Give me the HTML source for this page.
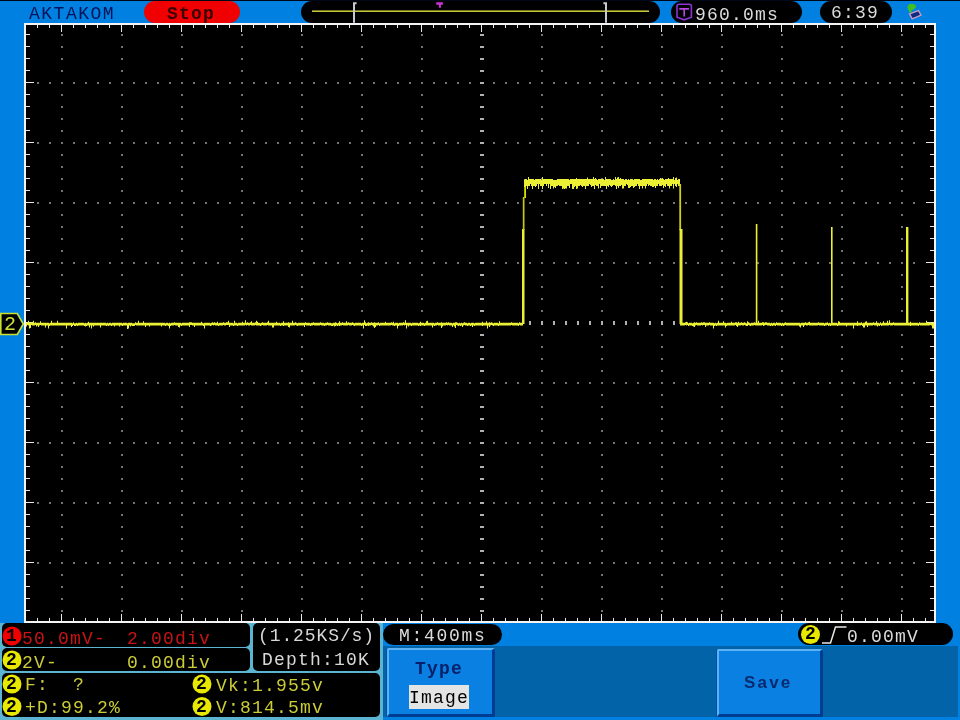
<!DOCTYPE html>
<html><head><meta charset="utf-8">
<style>
html,body{margin:0;padding:0;}
body{width:960px;height:720px;position:relative;overflow:hidden;background:#0080e0;font-family:"Liberation Mono",monospace;}
.a{position:absolute;}
.t{position:absolute;white-space:pre;font-family:"Liberation Mono",monospace;font-size:18px;line-height:20px;letter-spacing:1.2px;}
.pill{position:absolute;background:#000;border-radius:11px;}
</style></head><body><div style="position:absolute;left:0;top:0;width:960px;height:720px;overflow:hidden;filter:blur(0.45px)">
<!-- top dark row -->
<div class="a" style="left:0;top:0;width:960px;height:1px;background:#000818"></div>

<!-- graticule + waveform -->
<svg class="a" style="left:0;top:0" width="960" height="720" viewBox="0 0 960 720" shape-rendering="crispEdges">
<rect x="24" y="23" width="912" height="600" fill="#f4f4f4"/>
<rect x="26" y="25" width="908" height="596" fill="#000"/>
<path d="M37.5 25v3M37.5 621v-3M49.5 25v3M49.5 621v-3M61.5 25v7M61.5 621v-7M73.5 25v3M73.5 621v-3M85.5 25v3M85.5 621v-3M97.5 25v3M97.5 621v-3M109.5 25v3M109.5 621v-3M121.5 25v7M121.5 621v-7M133.5 25v3M133.5 621v-3M145.5 25v3M145.5 621v-3M157.5 25v3M157.5 621v-3M169.5 25v3M169.5 621v-3M181.5 25v7M181.5 621v-7M193.5 25v3M193.5 621v-3M205.5 25v3M205.5 621v-3M217.5 25v3M217.5 621v-3M229.5 25v3M229.5 621v-3M241.5 25v7M241.5 621v-7M253.5 25v3M253.5 621v-3M265.5 25v3M265.5 621v-3M277.5 25v3M277.5 621v-3M289.5 25v3M289.5 621v-3M301.5 25v7M301.5 621v-7M313.5 25v3M313.5 621v-3M325.5 25v3M325.5 621v-3M337.5 25v3M337.5 621v-3M349.5 25v3M349.5 621v-3M361.5 25v7M361.5 621v-7M373.5 25v3M373.5 621v-3M385.5 25v3M385.5 621v-3M397.5 25v3M397.5 621v-3M409.5 25v3M409.5 621v-3M421.5 25v7M421.5 621v-7M433.5 25v3M433.5 621v-3M445.5 25v3M445.5 621v-3M457.5 25v3M457.5 621v-3M469.5 25v3M469.5 621v-3M481.5 25v7M481.5 621v-7M493.5 25v3M493.5 621v-3M505.5 25v3M505.5 621v-3M517.5 25v3M517.5 621v-3M529.5 25v3M529.5 621v-3M541.5 25v7M541.5 621v-7M553.5 25v3M553.5 621v-3M565.5 25v3M565.5 621v-3M577.5 25v3M577.5 621v-3M589.5 25v3M589.5 621v-3M601.5 25v7M601.5 621v-7M613.5 25v3M613.5 621v-3M625.5 25v3M625.5 621v-3M637.5 25v3M637.5 621v-3M649.5 25v3M649.5 621v-3M661.5 25v7M661.5 621v-7M673.5 25v3M673.5 621v-3M685.5 25v3M685.5 621v-3M697.5 25v3M697.5 621v-3M709.5 25v3M709.5 621v-3M721.5 25v7M721.5 621v-7M733.5 25v3M733.5 621v-3M745.5 25v3M745.5 621v-3M757.5 25v3M757.5 621v-3M769.5 25v3M769.5 621v-3M781.5 25v7M781.5 621v-7M793.5 25v3M793.5 621v-3M805.5 25v3M805.5 621v-3M817.5 25v3M817.5 621v-3M829.5 25v3M829.5 621v-3M841.5 25v7M841.5 621v-7M853.5 25v3M853.5 621v-3M865.5 25v3M865.5 621v-3M877.5 25v3M877.5 621v-3M889.5 25v3M889.5 621v-3M901.5 25v7M901.5 621v-7M913.5 25v3M913.5 621v-3M925.5 25v3M925.5 621v-3M26 34.5h4M934 34.5h-4M26 46.5h4M934 46.5h-4M26 58.5h4M934 58.5h-4M26 70.5h4M934 70.5h-4M26 82.5h8M934 82.5h-8M26 94.5h4M934 94.5h-4M26 106.5h4M934 106.5h-4M26 118.5h4M934 118.5h-4M26 130.5h4M934 130.5h-4M26 142.5h8M934 142.5h-8M26 154.5h4M934 154.5h-4M26 166.5h4M934 166.5h-4M26 178.5h4M934 178.5h-4M26 190.5h4M934 190.5h-4M26 202.5h8M934 202.5h-8M26 214.5h4M934 214.5h-4M26 226.5h4M934 226.5h-4M26 238.5h4M934 238.5h-4M26 250.5h4M934 250.5h-4M26 262.5h8M934 262.5h-8M26 274.5h4M934 274.5h-4M26 286.5h4M934 286.5h-4M26 298.5h4M934 298.5h-4M26 310.5h4M934 310.5h-4M26 322.5h8M934 322.5h-8M26 334.5h4M934 334.5h-4M26 346.5h4M934 346.5h-4M26 358.5h4M934 358.5h-4M26 370.5h4M934 370.5h-4M26 382.5h8M934 382.5h-8M26 394.5h4M934 394.5h-4M26 406.5h4M934 406.5h-4M26 418.5h4M934 418.5h-4M26 430.5h4M934 430.5h-4M26 442.5h8M934 442.5h-8M26 454.5h4M934 454.5h-4M26 466.5h4M934 466.5h-4M26 478.5h4M934 478.5h-4M26 490.5h4M934 490.5h-4M26 502.5h8M934 502.5h-8M26 514.5h4M934 514.5h-4M26 526.5h4M934 526.5h-4M26 538.5h4M934 538.5h-4M26 550.5h4M934 550.5h-4M26 562.5h8M934 562.5h-8M26 574.5h4M934 574.5h-4M26 586.5h4M934 586.5h-4M26 598.5h4M934 598.5h-4M26 610.5h4M934 610.5h-4" stroke="#e8e8e8" stroke-width="1.4" fill="none"/>
<path d="M37 82h2v2h-2zM49 82h2v2h-2zM61 82h2v2h-2zM73 82h2v2h-2zM85 82h2v2h-2zM97 82h2v2h-2zM109 82h2v2h-2zM121 82h2v2h-2zM133 82h2v2h-2zM145 82h2v2h-2zM157 82h2v2h-2zM169 82h2v2h-2zM181 82h2v2h-2zM193 82h2v2h-2zM205 82h2v2h-2zM217 82h2v2h-2zM229 82h2v2h-2zM241 82h2v2h-2zM253 82h2v2h-2zM265 82h2v2h-2zM277 82h2v2h-2zM289 82h2v2h-2zM301 82h2v2h-2zM313 82h2v2h-2zM325 82h2v2h-2zM337 82h2v2h-2zM349 82h2v2h-2zM361 82h2v2h-2zM373 82h2v2h-2zM385 82h2v2h-2zM397 82h2v2h-2zM409 82h2v2h-2zM421 82h2v2h-2zM433 82h2v2h-2zM445 82h2v2h-2zM457 82h2v2h-2zM469 82h2v2h-2zM481 82h2v2h-2zM493 82h2v2h-2zM505 82h2v2h-2zM517 82h2v2h-2zM529 82h2v2h-2zM541 82h2v2h-2zM553 82h2v2h-2zM565 82h2v2h-2zM577 82h2v2h-2zM589 82h2v2h-2zM601 82h2v2h-2zM613 82h2v2h-2zM625 82h2v2h-2zM637 82h2v2h-2zM649 82h2v2h-2zM661 82h2v2h-2zM673 82h2v2h-2zM685 82h2v2h-2zM697 82h2v2h-2zM709 82h2v2h-2zM721 82h2v2h-2zM733 82h2v2h-2zM745 82h2v2h-2zM757 82h2v2h-2zM769 82h2v2h-2zM781 82h2v2h-2zM793 82h2v2h-2zM805 82h2v2h-2zM817 82h2v2h-2zM829 82h2v2h-2zM841 82h2v2h-2zM853 82h2v2h-2zM865 82h2v2h-2zM877 82h2v2h-2zM889 82h2v2h-2zM901 82h2v2h-2zM913 82h2v2h-2zM37 142h2v2h-2zM49 142h2v2h-2zM61 142h2v2h-2zM73 142h2v2h-2zM85 142h2v2h-2zM97 142h2v2h-2zM109 142h2v2h-2zM121 142h2v2h-2zM133 142h2v2h-2zM145 142h2v2h-2zM157 142h2v2h-2zM169 142h2v2h-2zM181 142h2v2h-2zM193 142h2v2h-2zM205 142h2v2h-2zM217 142h2v2h-2zM229 142h2v2h-2zM241 142h2v2h-2zM253 142h2v2h-2zM265 142h2v2h-2zM277 142h2v2h-2zM289 142h2v2h-2zM301 142h2v2h-2zM313 142h2v2h-2zM325 142h2v2h-2zM337 142h2v2h-2zM349 142h2v2h-2zM361 142h2v2h-2zM373 142h2v2h-2zM385 142h2v2h-2zM397 142h2v2h-2zM409 142h2v2h-2zM421 142h2v2h-2zM433 142h2v2h-2zM445 142h2v2h-2zM457 142h2v2h-2zM469 142h2v2h-2zM481 142h2v2h-2zM493 142h2v2h-2zM505 142h2v2h-2zM517 142h2v2h-2zM529 142h2v2h-2zM541 142h2v2h-2zM553 142h2v2h-2zM565 142h2v2h-2zM577 142h2v2h-2zM589 142h2v2h-2zM601 142h2v2h-2zM613 142h2v2h-2zM625 142h2v2h-2zM637 142h2v2h-2zM649 142h2v2h-2zM661 142h2v2h-2zM673 142h2v2h-2zM685 142h2v2h-2zM697 142h2v2h-2zM709 142h2v2h-2zM721 142h2v2h-2zM733 142h2v2h-2zM745 142h2v2h-2zM757 142h2v2h-2zM769 142h2v2h-2zM781 142h2v2h-2zM793 142h2v2h-2zM805 142h2v2h-2zM817 142h2v2h-2zM829 142h2v2h-2zM841 142h2v2h-2zM853 142h2v2h-2zM865 142h2v2h-2zM877 142h2v2h-2zM889 142h2v2h-2zM901 142h2v2h-2zM913 142h2v2h-2zM37 202h2v2h-2zM49 202h2v2h-2zM61 202h2v2h-2zM73 202h2v2h-2zM85 202h2v2h-2zM97 202h2v2h-2zM109 202h2v2h-2zM121 202h2v2h-2zM133 202h2v2h-2zM145 202h2v2h-2zM157 202h2v2h-2zM169 202h2v2h-2zM181 202h2v2h-2zM193 202h2v2h-2zM205 202h2v2h-2zM217 202h2v2h-2zM229 202h2v2h-2zM241 202h2v2h-2zM253 202h2v2h-2zM265 202h2v2h-2zM277 202h2v2h-2zM289 202h2v2h-2zM301 202h2v2h-2zM313 202h2v2h-2zM325 202h2v2h-2zM337 202h2v2h-2zM349 202h2v2h-2zM361 202h2v2h-2zM373 202h2v2h-2zM385 202h2v2h-2zM397 202h2v2h-2zM409 202h2v2h-2zM421 202h2v2h-2zM433 202h2v2h-2zM445 202h2v2h-2zM457 202h2v2h-2zM469 202h2v2h-2zM481 202h2v2h-2zM493 202h2v2h-2zM505 202h2v2h-2zM517 202h2v2h-2zM529 202h2v2h-2zM541 202h2v2h-2zM553 202h2v2h-2zM565 202h2v2h-2zM577 202h2v2h-2zM589 202h2v2h-2zM601 202h2v2h-2zM613 202h2v2h-2zM625 202h2v2h-2zM637 202h2v2h-2zM649 202h2v2h-2zM661 202h2v2h-2zM673 202h2v2h-2zM685 202h2v2h-2zM697 202h2v2h-2zM709 202h2v2h-2zM721 202h2v2h-2zM733 202h2v2h-2zM745 202h2v2h-2zM757 202h2v2h-2zM769 202h2v2h-2zM781 202h2v2h-2zM793 202h2v2h-2zM805 202h2v2h-2zM817 202h2v2h-2zM829 202h2v2h-2zM841 202h2v2h-2zM853 202h2v2h-2zM865 202h2v2h-2zM877 202h2v2h-2zM889 202h2v2h-2zM901 202h2v2h-2zM913 202h2v2h-2zM37 262h2v2h-2zM49 262h2v2h-2zM61 262h2v2h-2zM73 262h2v2h-2zM85 262h2v2h-2zM97 262h2v2h-2zM109 262h2v2h-2zM121 262h2v2h-2zM133 262h2v2h-2zM145 262h2v2h-2zM157 262h2v2h-2zM169 262h2v2h-2zM181 262h2v2h-2zM193 262h2v2h-2zM205 262h2v2h-2zM217 262h2v2h-2zM229 262h2v2h-2zM241 262h2v2h-2zM253 262h2v2h-2zM265 262h2v2h-2zM277 262h2v2h-2zM289 262h2v2h-2zM301 262h2v2h-2zM313 262h2v2h-2zM325 262h2v2h-2zM337 262h2v2h-2zM349 262h2v2h-2zM361 262h2v2h-2zM373 262h2v2h-2zM385 262h2v2h-2zM397 262h2v2h-2zM409 262h2v2h-2zM421 262h2v2h-2zM433 262h2v2h-2zM445 262h2v2h-2zM457 262h2v2h-2zM469 262h2v2h-2zM481 262h2v2h-2zM493 262h2v2h-2zM505 262h2v2h-2zM517 262h2v2h-2zM529 262h2v2h-2zM541 262h2v2h-2zM553 262h2v2h-2zM565 262h2v2h-2zM577 262h2v2h-2zM589 262h2v2h-2zM601 262h2v2h-2zM613 262h2v2h-2zM625 262h2v2h-2zM637 262h2v2h-2zM649 262h2v2h-2zM661 262h2v2h-2zM673 262h2v2h-2zM685 262h2v2h-2zM697 262h2v2h-2zM709 262h2v2h-2zM721 262h2v2h-2zM733 262h2v2h-2zM745 262h2v2h-2zM757 262h2v2h-2zM769 262h2v2h-2zM781 262h2v2h-2zM793 262h2v2h-2zM805 262h2v2h-2zM817 262h2v2h-2zM829 262h2v2h-2zM841 262h2v2h-2zM853 262h2v2h-2zM865 262h2v2h-2zM877 262h2v2h-2zM889 262h2v2h-2zM901 262h2v2h-2zM913 262h2v2h-2zM37 382h2v2h-2zM49 382h2v2h-2zM61 382h2v2h-2zM73 382h2v2h-2zM85 382h2v2h-2zM97 382h2v2h-2zM109 382h2v2h-2zM121 382h2v2h-2zM133 382h2v2h-2zM145 382h2v2h-2zM157 382h2v2h-2zM169 382h2v2h-2zM181 382h2v2h-2zM193 382h2v2h-2zM205 382h2v2h-2zM217 382h2v2h-2zM229 382h2v2h-2zM241 382h2v2h-2zM253 382h2v2h-2zM265 382h2v2h-2zM277 382h2v2h-2zM289 382h2v2h-2zM301 382h2v2h-2zM313 382h2v2h-2zM325 382h2v2h-2zM337 382h2v2h-2zM349 382h2v2h-2zM361 382h2v2h-2zM373 382h2v2h-2zM385 382h2v2h-2zM397 382h2v2h-2zM409 382h2v2h-2zM421 382h2v2h-2zM433 382h2v2h-2zM445 382h2v2h-2zM457 382h2v2h-2zM469 382h2v2h-2zM481 382h2v2h-2zM493 382h2v2h-2zM505 382h2v2h-2zM517 382h2v2h-2zM529 382h2v2h-2zM541 382h2v2h-2zM553 382h2v2h-2zM565 382h2v2h-2zM577 382h2v2h-2zM589 382h2v2h-2zM601 382h2v2h-2zM613 382h2v2h-2zM625 382h2v2h-2zM637 382h2v2h-2zM649 382h2v2h-2zM661 382h2v2h-2zM673 382h2v2h-2zM685 382h2v2h-2zM697 382h2v2h-2zM709 382h2v2h-2zM721 382h2v2h-2zM733 382h2v2h-2zM745 382h2v2h-2zM757 382h2v2h-2zM769 382h2v2h-2zM781 382h2v2h-2zM793 382h2v2h-2zM805 382h2v2h-2zM817 382h2v2h-2zM829 382h2v2h-2zM841 382h2v2h-2zM853 382h2v2h-2zM865 382h2v2h-2zM877 382h2v2h-2zM889 382h2v2h-2zM901 382h2v2h-2zM913 382h2v2h-2zM37 442h2v2h-2zM49 442h2v2h-2zM61 442h2v2h-2zM73 442h2v2h-2zM85 442h2v2h-2zM97 442h2v2h-2zM109 442h2v2h-2zM121 442h2v2h-2zM133 442h2v2h-2zM145 442h2v2h-2zM157 442h2v2h-2zM169 442h2v2h-2zM181 442h2v2h-2zM193 442h2v2h-2zM205 442h2v2h-2zM217 442h2v2h-2zM229 442h2v2h-2zM241 442h2v2h-2zM253 442h2v2h-2zM265 442h2v2h-2zM277 442h2v2h-2zM289 442h2v2h-2zM301 442h2v2h-2zM313 442h2v2h-2zM325 442h2v2h-2zM337 442h2v2h-2zM349 442h2v2h-2zM361 442h2v2h-2zM373 442h2v2h-2zM385 442h2v2h-2zM397 442h2v2h-2zM409 442h2v2h-2zM421 442h2v2h-2zM433 442h2v2h-2zM445 442h2v2h-2zM457 442h2v2h-2zM469 442h2v2h-2zM481 442h2v2h-2zM493 442h2v2h-2zM505 442h2v2h-2zM517 442h2v2h-2zM529 442h2v2h-2zM541 442h2v2h-2zM553 442h2v2h-2zM565 442h2v2h-2zM577 442h2v2h-2zM589 442h2v2h-2zM601 442h2v2h-2zM613 442h2v2h-2zM625 442h2v2h-2zM637 442h2v2h-2zM649 442h2v2h-2zM661 442h2v2h-2zM673 442h2v2h-2zM685 442h2v2h-2zM697 442h2v2h-2zM709 442h2v2h-2zM721 442h2v2h-2zM733 442h2v2h-2zM745 442h2v2h-2zM757 442h2v2h-2zM769 442h2v2h-2zM781 442h2v2h-2zM793 442h2v2h-2zM805 442h2v2h-2zM817 442h2v2h-2zM829 442h2v2h-2zM841 442h2v2h-2zM853 442h2v2h-2zM865 442h2v2h-2zM877 442h2v2h-2zM889 442h2v2h-2zM901 442h2v2h-2zM913 442h2v2h-2zM37 502h2v2h-2zM49 502h2v2h-2zM61 502h2v2h-2zM73 502h2v2h-2zM85 502h2v2h-2zM97 502h2v2h-2zM109 502h2v2h-2zM121 502h2v2h-2zM133 502h2v2h-2zM145 502h2v2h-2zM157 502h2v2h-2zM169 502h2v2h-2zM181 502h2v2h-2zM193 502h2v2h-2zM205 502h2v2h-2zM217 502h2v2h-2zM229 502h2v2h-2zM241 502h2v2h-2zM253 502h2v2h-2zM265 502h2v2h-2zM277 502h2v2h-2zM289 502h2v2h-2zM301 502h2v2h-2zM313 502h2v2h-2zM325 502h2v2h-2zM337 502h2v2h-2zM349 502h2v2h-2zM361 502h2v2h-2zM373 502h2v2h-2zM385 502h2v2h-2zM397 502h2v2h-2zM409 502h2v2h-2zM421 502h2v2h-2zM433 502h2v2h-2zM445 502h2v2h-2zM457 502h2v2h-2zM469 502h2v2h-2zM481 502h2v2h-2zM493 502h2v2h-2zM505 502h2v2h-2zM517 502h2v2h-2zM529 502h2v2h-2zM541 502h2v2h-2zM553 502h2v2h-2zM565 502h2v2h-2zM577 502h2v2h-2zM589 502h2v2h-2zM601 502h2v2h-2zM613 502h2v2h-2zM625 502h2v2h-2zM637 502h2v2h-2zM649 502h2v2h-2zM661 502h2v2h-2zM673 502h2v2h-2zM685 502h2v2h-2zM697 502h2v2h-2zM709 502h2v2h-2zM721 502h2v2h-2zM733 502h2v2h-2zM745 502h2v2h-2zM757 502h2v2h-2zM769 502h2v2h-2zM781 502h2v2h-2zM793 502h2v2h-2zM805 502h2v2h-2zM817 502h2v2h-2zM829 502h2v2h-2zM841 502h2v2h-2zM853 502h2v2h-2zM865 502h2v2h-2zM877 502h2v2h-2zM889 502h2v2h-2zM901 502h2v2h-2zM913 502h2v2h-2zM37 562h2v2h-2zM49 562h2v2h-2zM61 562h2v2h-2zM73 562h2v2h-2zM85 562h2v2h-2zM97 562h2v2h-2zM109 562h2v2h-2zM121 562h2v2h-2zM133 562h2v2h-2zM145 562h2v2h-2zM157 562h2v2h-2zM169 562h2v2h-2zM181 562h2v2h-2zM193 562h2v2h-2zM205 562h2v2h-2zM217 562h2v2h-2zM229 562h2v2h-2zM241 562h2v2h-2zM253 562h2v2h-2zM265 562h2v2h-2zM277 562h2v2h-2zM289 562h2v2h-2zM301 562h2v2h-2zM313 562h2v2h-2zM325 562h2v2h-2zM337 562h2v2h-2zM349 562h2v2h-2zM361 562h2v2h-2zM373 562h2v2h-2zM385 562h2v2h-2zM397 562h2v2h-2zM409 562h2v2h-2zM421 562h2v2h-2zM433 562h2v2h-2zM445 562h2v2h-2zM457 562h2v2h-2zM469 562h2v2h-2zM481 562h2v2h-2zM493 562h2v2h-2zM505 562h2v2h-2zM517 562h2v2h-2zM529 562h2v2h-2zM541 562h2v2h-2zM553 562h2v2h-2zM565 562h2v2h-2zM577 562h2v2h-2zM589 562h2v2h-2zM601 562h2v2h-2zM613 562h2v2h-2zM625 562h2v2h-2zM637 562h2v2h-2zM649 562h2v2h-2zM661 562h2v2h-2zM673 562h2v2h-2zM685 562h2v2h-2zM697 562h2v2h-2zM709 562h2v2h-2zM721 562h2v2h-2zM733 562h2v2h-2zM745 562h2v2h-2zM757 562h2v2h-2zM769 562h2v2h-2zM781 562h2v2h-2zM793 562h2v2h-2zM805 562h2v2h-2zM817 562h2v2h-2zM829 562h2v2h-2zM841 562h2v2h-2zM853 562h2v2h-2zM865 562h2v2h-2zM877 562h2v2h-2zM889 562h2v2h-2zM901 562h2v2h-2zM913 562h2v2h-2zM61 34h2v2h-2zM61 46h2v2h-2zM61 58h2v2h-2zM61 70h2v2h-2zM61 94h2v2h-2zM61 106h2v2h-2zM61 118h2v2h-2zM61 130h2v2h-2zM61 154h2v2h-2zM61 166h2v2h-2zM61 178h2v2h-2zM61 190h2v2h-2zM61 214h2v2h-2zM61 226h2v2h-2zM61 238h2v2h-2zM61 250h2v2h-2zM61 274h2v2h-2zM61 286h2v2h-2zM61 298h2v2h-2zM61 310h2v2h-2zM61 334h2v2h-2zM61 346h2v2h-2zM61 358h2v2h-2zM61 370h2v2h-2zM61 394h2v2h-2zM61 406h2v2h-2zM61 418h2v2h-2zM61 430h2v2h-2zM61 454h2v2h-2zM61 466h2v2h-2zM61 478h2v2h-2zM61 490h2v2h-2zM61 514h2v2h-2zM61 526h2v2h-2zM61 538h2v2h-2zM61 550h2v2h-2zM61 574h2v2h-2zM61 586h2v2h-2zM61 598h2v2h-2zM61 610h2v2h-2zM121 34h2v2h-2zM121 46h2v2h-2zM121 58h2v2h-2zM121 70h2v2h-2zM121 94h2v2h-2zM121 106h2v2h-2zM121 118h2v2h-2zM121 130h2v2h-2zM121 154h2v2h-2zM121 166h2v2h-2zM121 178h2v2h-2zM121 190h2v2h-2zM121 214h2v2h-2zM121 226h2v2h-2zM121 238h2v2h-2zM121 250h2v2h-2zM121 274h2v2h-2zM121 286h2v2h-2zM121 298h2v2h-2zM121 310h2v2h-2zM121 334h2v2h-2zM121 346h2v2h-2zM121 358h2v2h-2zM121 370h2v2h-2zM121 394h2v2h-2zM121 406h2v2h-2zM121 418h2v2h-2zM121 430h2v2h-2zM121 454h2v2h-2zM121 466h2v2h-2zM121 478h2v2h-2zM121 490h2v2h-2zM121 514h2v2h-2zM121 526h2v2h-2zM121 538h2v2h-2zM121 550h2v2h-2zM121 574h2v2h-2zM121 586h2v2h-2zM121 598h2v2h-2zM121 610h2v2h-2zM181 34h2v2h-2zM181 46h2v2h-2zM181 58h2v2h-2zM181 70h2v2h-2zM181 94h2v2h-2zM181 106h2v2h-2zM181 118h2v2h-2zM181 130h2v2h-2zM181 154h2v2h-2zM181 166h2v2h-2zM181 178h2v2h-2zM181 190h2v2h-2zM181 214h2v2h-2zM181 226h2v2h-2zM181 238h2v2h-2zM181 250h2v2h-2zM181 274h2v2h-2zM181 286h2v2h-2zM181 298h2v2h-2zM181 310h2v2h-2zM181 334h2v2h-2zM181 346h2v2h-2zM181 358h2v2h-2zM181 370h2v2h-2zM181 394h2v2h-2zM181 406h2v2h-2zM181 418h2v2h-2zM181 430h2v2h-2zM181 454h2v2h-2zM181 466h2v2h-2zM181 478h2v2h-2zM181 490h2v2h-2zM181 514h2v2h-2zM181 526h2v2h-2zM181 538h2v2h-2zM181 550h2v2h-2zM181 574h2v2h-2zM181 586h2v2h-2zM181 598h2v2h-2zM181 610h2v2h-2zM241 34h2v2h-2zM241 46h2v2h-2zM241 58h2v2h-2zM241 70h2v2h-2zM241 94h2v2h-2zM241 106h2v2h-2zM241 118h2v2h-2zM241 130h2v2h-2zM241 154h2v2h-2zM241 166h2v2h-2zM241 178h2v2h-2zM241 190h2v2h-2zM241 214h2v2h-2zM241 226h2v2h-2zM241 238h2v2h-2zM241 250h2v2h-2zM241 274h2v2h-2zM241 286h2v2h-2zM241 298h2v2h-2zM241 310h2v2h-2zM241 334h2v2h-2zM241 346h2v2h-2zM241 358h2v2h-2zM241 370h2v2h-2zM241 394h2v2h-2zM241 406h2v2h-2zM241 418h2v2h-2zM241 430h2v2h-2zM241 454h2v2h-2zM241 466h2v2h-2zM241 478h2v2h-2zM241 490h2v2h-2zM241 514h2v2h-2zM241 526h2v2h-2zM241 538h2v2h-2zM241 550h2v2h-2zM241 574h2v2h-2zM241 586h2v2h-2zM241 598h2v2h-2zM241 610h2v2h-2zM301 34h2v2h-2zM301 46h2v2h-2zM301 58h2v2h-2zM301 70h2v2h-2zM301 94h2v2h-2zM301 106h2v2h-2zM301 118h2v2h-2zM301 130h2v2h-2zM301 154h2v2h-2zM301 166h2v2h-2zM301 178h2v2h-2zM301 190h2v2h-2zM301 214h2v2h-2zM301 226h2v2h-2zM301 238h2v2h-2zM301 250h2v2h-2zM301 274h2v2h-2zM301 286h2v2h-2zM301 298h2v2h-2zM301 310h2v2h-2zM301 334h2v2h-2zM301 346h2v2h-2zM301 358h2v2h-2zM301 370h2v2h-2zM301 394h2v2h-2zM301 406h2v2h-2zM301 418h2v2h-2zM301 430h2v2h-2zM301 454h2v2h-2zM301 466h2v2h-2zM301 478h2v2h-2zM301 490h2v2h-2zM301 514h2v2h-2zM301 526h2v2h-2zM301 538h2v2h-2zM301 550h2v2h-2zM301 574h2v2h-2zM301 586h2v2h-2zM301 598h2v2h-2zM301 610h2v2h-2zM361 34h2v2h-2zM361 46h2v2h-2zM361 58h2v2h-2zM361 70h2v2h-2zM361 94h2v2h-2zM361 106h2v2h-2zM361 118h2v2h-2zM361 130h2v2h-2zM361 154h2v2h-2zM361 166h2v2h-2zM361 178h2v2h-2zM361 190h2v2h-2zM361 214h2v2h-2zM361 226h2v2h-2zM361 238h2v2h-2zM361 250h2v2h-2zM361 274h2v2h-2zM361 286h2v2h-2zM361 298h2v2h-2zM361 310h2v2h-2zM361 334h2v2h-2zM361 346h2v2h-2zM361 358h2v2h-2zM361 370h2v2h-2zM361 394h2v2h-2zM361 406h2v2h-2zM361 418h2v2h-2zM361 430h2v2h-2zM361 454h2v2h-2zM361 466h2v2h-2zM361 478h2v2h-2zM361 490h2v2h-2zM361 514h2v2h-2zM361 526h2v2h-2zM361 538h2v2h-2zM361 550h2v2h-2zM361 574h2v2h-2zM361 586h2v2h-2zM361 598h2v2h-2zM361 610h2v2h-2zM421 34h2v2h-2zM421 46h2v2h-2zM421 58h2v2h-2zM421 70h2v2h-2zM421 94h2v2h-2zM421 106h2v2h-2zM421 118h2v2h-2zM421 130h2v2h-2zM421 154h2v2h-2zM421 166h2v2h-2zM421 178h2v2h-2zM421 190h2v2h-2zM421 214h2v2h-2zM421 226h2v2h-2zM421 238h2v2h-2zM421 250h2v2h-2zM421 274h2v2h-2zM421 286h2v2h-2zM421 298h2v2h-2zM421 310h2v2h-2zM421 334h2v2h-2zM421 346h2v2h-2zM421 358h2v2h-2zM421 370h2v2h-2zM421 394h2v2h-2zM421 406h2v2h-2zM421 418h2v2h-2zM421 430h2v2h-2zM421 454h2v2h-2zM421 466h2v2h-2zM421 478h2v2h-2zM421 490h2v2h-2zM421 514h2v2h-2zM421 526h2v2h-2zM421 538h2v2h-2zM421 550h2v2h-2zM421 574h2v2h-2zM421 586h2v2h-2zM421 598h2v2h-2zM421 610h2v2h-2zM541 34h2v2h-2zM541 46h2v2h-2zM541 58h2v2h-2zM541 70h2v2h-2zM541 94h2v2h-2zM541 106h2v2h-2zM541 118h2v2h-2zM541 130h2v2h-2zM541 154h2v2h-2zM541 166h2v2h-2zM541 178h2v2h-2zM541 190h2v2h-2zM541 214h2v2h-2zM541 226h2v2h-2zM541 238h2v2h-2zM541 250h2v2h-2zM541 274h2v2h-2zM541 286h2v2h-2zM541 298h2v2h-2zM541 310h2v2h-2zM541 334h2v2h-2zM541 346h2v2h-2zM541 358h2v2h-2zM541 370h2v2h-2zM541 394h2v2h-2zM541 406h2v2h-2zM541 418h2v2h-2zM541 430h2v2h-2zM541 454h2v2h-2zM541 466h2v2h-2zM541 478h2v2h-2zM541 490h2v2h-2zM541 514h2v2h-2zM541 526h2v2h-2zM541 538h2v2h-2zM541 550h2v2h-2zM541 574h2v2h-2zM541 586h2v2h-2zM541 598h2v2h-2zM541 610h2v2h-2zM601 34h2v2h-2zM601 46h2v2h-2zM601 58h2v2h-2zM601 70h2v2h-2zM601 94h2v2h-2zM601 106h2v2h-2zM601 118h2v2h-2zM601 130h2v2h-2zM601 154h2v2h-2zM601 166h2v2h-2zM601 178h2v2h-2zM601 190h2v2h-2zM601 214h2v2h-2zM601 226h2v2h-2zM601 238h2v2h-2zM601 250h2v2h-2zM601 274h2v2h-2zM601 286h2v2h-2zM601 298h2v2h-2zM601 310h2v2h-2zM601 334h2v2h-2zM601 346h2v2h-2zM601 358h2v2h-2zM601 370h2v2h-2zM601 394h2v2h-2zM601 406h2v2h-2zM601 418h2v2h-2zM601 430h2v2h-2zM601 454h2v2h-2zM601 466h2v2h-2zM601 478h2v2h-2zM601 490h2v2h-2zM601 514h2v2h-2zM601 526h2v2h-2zM601 538h2v2h-2zM601 550h2v2h-2zM601 574h2v2h-2zM601 586h2v2h-2zM601 598h2v2h-2zM601 610h2v2h-2zM661 34h2v2h-2zM661 46h2v2h-2zM661 58h2v2h-2zM661 70h2v2h-2zM661 94h2v2h-2zM661 106h2v2h-2zM661 118h2v2h-2zM661 130h2v2h-2zM661 154h2v2h-2zM661 166h2v2h-2zM661 178h2v2h-2zM661 190h2v2h-2zM661 214h2v2h-2zM661 226h2v2h-2zM661 238h2v2h-2zM661 250h2v2h-2zM661 274h2v2h-2zM661 286h2v2h-2zM661 298h2v2h-2zM661 310h2v2h-2zM661 334h2v2h-2zM661 346h2v2h-2zM661 358h2v2h-2zM661 370h2v2h-2zM661 394h2v2h-2zM661 406h2v2h-2zM661 418h2v2h-2zM661 430h2v2h-2zM661 454h2v2h-2zM661 466h2v2h-2zM661 478h2v2h-2zM661 490h2v2h-2zM661 514h2v2h-2zM661 526h2v2h-2zM661 538h2v2h-2zM661 550h2v2h-2zM661 574h2v2h-2zM661 586h2v2h-2zM661 598h2v2h-2zM661 610h2v2h-2zM721 34h2v2h-2zM721 46h2v2h-2zM721 58h2v2h-2zM721 70h2v2h-2zM721 94h2v2h-2zM721 106h2v2h-2zM721 118h2v2h-2zM721 130h2v2h-2zM721 154h2v2h-2zM721 166h2v2h-2zM721 178h2v2h-2zM721 190h2v2h-2zM721 214h2v2h-2zM721 226h2v2h-2zM721 238h2v2h-2zM721 250h2v2h-2zM721 274h2v2h-2zM721 286h2v2h-2zM721 298h2v2h-2zM721 310h2v2h-2zM721 334h2v2h-2zM721 346h2v2h-2zM721 358h2v2h-2zM721 370h2v2h-2zM721 394h2v2h-2zM721 406h2v2h-2zM721 418h2v2h-2zM721 430h2v2h-2zM721 454h2v2h-2zM721 466h2v2h-2zM721 478h2v2h-2zM721 490h2v2h-2zM721 514h2v2h-2zM721 526h2v2h-2zM721 538h2v2h-2zM721 550h2v2h-2zM721 574h2v2h-2zM721 586h2v2h-2zM721 598h2v2h-2zM721 610h2v2h-2zM781 34h2v2h-2zM781 46h2v2h-2zM781 58h2v2h-2zM781 70h2v2h-2zM781 94h2v2h-2zM781 106h2v2h-2zM781 118h2v2h-2zM781 130h2v2h-2zM781 154h2v2h-2zM781 166h2v2h-2zM781 178h2v2h-2zM781 190h2v2h-2zM781 214h2v2h-2zM781 226h2v2h-2zM781 238h2v2h-2zM781 250h2v2h-2zM781 274h2v2h-2zM781 286h2v2h-2zM781 298h2v2h-2zM781 310h2v2h-2zM781 334h2v2h-2zM781 346h2v2h-2zM781 358h2v2h-2zM781 370h2v2h-2zM781 394h2v2h-2zM781 406h2v2h-2zM781 418h2v2h-2zM781 430h2v2h-2zM781 454h2v2h-2zM781 466h2v2h-2zM781 478h2v2h-2zM781 490h2v2h-2zM781 514h2v2h-2zM781 526h2v2h-2zM781 538h2v2h-2zM781 550h2v2h-2zM781 574h2v2h-2zM781 586h2v2h-2zM781 598h2v2h-2zM781 610h2v2h-2zM841 34h2v2h-2zM841 46h2v2h-2zM841 58h2v2h-2zM841 70h2v2h-2zM841 94h2v2h-2zM841 106h2v2h-2zM841 118h2v2h-2zM841 130h2v2h-2zM841 154h2v2h-2zM841 166h2v2h-2zM841 178h2v2h-2zM841 190h2v2h-2zM841 214h2v2h-2zM841 226h2v2h-2zM841 238h2v2h-2zM841 250h2v2h-2zM841 274h2v2h-2zM841 286h2v2h-2zM841 298h2v2h-2zM841 310h2v2h-2zM841 334h2v2h-2zM841 346h2v2h-2zM841 358h2v2h-2zM841 370h2v2h-2zM841 394h2v2h-2zM841 406h2v2h-2zM841 418h2v2h-2zM841 430h2v2h-2zM841 454h2v2h-2zM841 466h2v2h-2zM841 478h2v2h-2zM841 490h2v2h-2zM841 514h2v2h-2zM841 526h2v2h-2zM841 538h2v2h-2zM841 550h2v2h-2zM841 574h2v2h-2zM841 586h2v2h-2zM841 598h2v2h-2zM841 610h2v2h-2zM901 34h2v2h-2zM901 46h2v2h-2zM901 58h2v2h-2zM901 70h2v2h-2zM901 94h2v2h-2zM901 106h2v2h-2zM901 118h2v2h-2zM901 130h2v2h-2zM901 154h2v2h-2zM901 166h2v2h-2zM901 178h2v2h-2zM901 190h2v2h-2zM901 214h2v2h-2zM901 226h2v2h-2zM901 238h2v2h-2zM901 250h2v2h-2zM901 274h2v2h-2zM901 286h2v2h-2zM901 298h2v2h-2zM901 310h2v2h-2zM901 334h2v2h-2zM901 346h2v2h-2zM901 358h2v2h-2zM901 370h2v2h-2zM901 394h2v2h-2zM901 406h2v2h-2zM901 418h2v2h-2zM901 430h2v2h-2zM901 454h2v2h-2zM901 466h2v2h-2zM901 478h2v2h-2zM901 490h2v2h-2zM901 514h2v2h-2zM901 526h2v2h-2zM901 538h2v2h-2zM901 550h2v2h-2zM901 574h2v2h-2zM901 586h2v2h-2zM901 598h2v2h-2zM901 610h2v2h-2z" fill="#747474"/>
<path d="M480 34h4v2h-4zM480 46h4v2h-4zM480 58h4v2h-4zM480 70h4v2h-4zM480 82h4v2h-4zM480 94h4v2h-4zM480 106h4v2h-4zM480 118h4v2h-4zM480 130h4v2h-4zM480 142h4v2h-4zM480 154h4v2h-4zM480 166h4v2h-4zM480 178h4v2h-4zM480 190h4v2h-4zM480 202h4v2h-4zM480 214h4v2h-4zM480 226h4v2h-4zM480 238h4v2h-4zM480 250h4v2h-4zM480 262h4v2h-4zM480 274h4v2h-4zM480 286h4v2h-4zM480 298h4v2h-4zM480 310h4v2h-4zM480 334h4v2h-4zM480 346h4v2h-4zM480 358h4v2h-4zM480 370h4v2h-4zM480 382h4v2h-4zM480 394h4v2h-4zM480 406h4v2h-4zM480 418h4v2h-4zM480 430h4v2h-4zM480 442h4v2h-4zM480 454h4v2h-4zM480 466h4v2h-4zM480 478h4v2h-4zM480 490h4v2h-4zM480 502h4v2h-4zM480 514h4v2h-4zM480 526h4v2h-4zM480 538h4v2h-4zM480 550h4v2h-4zM480 562h4v2h-4zM480 574h4v2h-4zM480 586h4v2h-4zM480 598h4v2h-4zM480 610h4v2h-4zM529 321h2v4h-2zM541 321h2v4h-2zM553 321h2v4h-2zM565 321h2v4h-2zM577 321h2v4h-2zM589 321h2v4h-2zM601 321h2v4h-2zM613 321h2v4h-2zM625 321h2v4h-2zM637 321h2v4h-2zM649 321h2v4h-2zM661 321h2v4h-2zM673 321h2v4h-2z" fill="#b0b0b0"/>
</svg>
<svg class="a" style="left:0;top:0" width="960" height="720" viewBox="0 0 960 720">
<path d="M26 322.8h1v3.8000000000000114h-1zM27 322.3h1v2.8000000000000114h-1zM28 320.8h1v4.800000000000011h-1zM29 322.8h1v5.800000000000011h-1zM30 322.3h1v5.800000000000011h-1zM31 322.3h1v2.8000000000000114h-1zM32 322.8h1v2.8000000000000114h-1zM33 320.8h1v4.800000000000011h-1zM34 322.8h1v2.8000000000000114h-1zM35 322.3h1v2.8000000000000114h-1zM36 322.8h1v3.8000000000000114h-1zM37 322.8h1v2.8000000000000114h-1zM38 322.8h1v4.300000000000011h-1zM39 322.8h1v2.8000000000000114h-1zM40 321.3h1v3.8000000000000114h-1zM41 322.8h1v2.8000000000000114h-1zM42 322.8h1v2.8000000000000114h-1zM43 322.8h1v2.8000000000000114h-1zM44 322.8h1v2.8000000000000114h-1zM45 322.8h1v4.800000000000011h-1zM46 322.8h1v2.8000000000000114h-1zM47 322.8h1v2.8000000000000114h-1zM48 322.8h1v5.800000000000011h-1zM49 323.3h1v2.8000000000000114h-1zM50 322.8h1v2.8000000000000114h-1zM51 320.8h1v4.800000000000011h-1zM52 322.8h1v2.8000000000000114h-1zM53 322.8h1v2.8000000000000114h-1zM54 322.8h1v2.8000000000000114h-1zM55 322.8h1v2.8000000000000114h-1zM56 322.8h1v2.8000000000000114h-1zM57 320.8h1v4.800000000000011h-1zM58 322.8h1v2.8000000000000114h-1zM59 322.8h1v2.8000000000000114h-1zM60 322.8h1v2.8000000000000114h-1zM61 322.8h1v2.8000000000000114h-1zM62 322.8h1v2.8000000000000114h-1zM63 322.8h1v2.8000000000000114h-1zM64 322.8h1v2.8000000000000114h-1zM65 322.8h1v2.8000000000000114h-1zM66 322.8h1v5.800000000000011h-1zM67 322.8h1v2.8000000000000114h-1zM68 322.8h1v2.8000000000000114h-1zM69 322.8h1v2.8000000000000114h-1zM70 322.8h1v2.8000000000000114h-1zM71 322.8h1v4.300000000000011h-1zM72 323.3h1v2.8000000000000114h-1zM73 322.3h1v2.8000000000000114h-1zM74 323.3h1v2.8000000000000114h-1zM75 323.3h1v2.8000000000000114h-1zM76 322.8h1v2.8000000000000114h-1zM77 323.3h1v2.8000000000000114h-1zM78 322.8h1v2.8000000000000114h-1zM79 322.8h1v2.8000000000000114h-1zM80 322.8h1v2.8000000000000114h-1zM81 322.8h1v2.8000000000000114h-1zM82 322.8h1v2.8000000000000114h-1zM83 322.8h1v2.8000000000000114h-1zM84 323.3h1v2.8000000000000114h-1zM85 322.8h1v3.8000000000000114h-1zM86 323.3h1v2.8000000000000114h-1zM87 322.8h1v2.8000000000000114h-1zM88 321.8h1v3.8000000000000114h-1zM89 322.8h1v4.800000000000011h-1zM90 322.8h1v2.8000000000000114h-1zM91 322.8h1v5.800000000000011h-1zM92 322.8h1v2.8000000000000114h-1zM93 322.8h1v3.8000000000000114h-1zM94 322.8h1v2.8000000000000114h-1zM95 322.8h1v2.8000000000000114h-1zM96 322.8h1v2.8000000000000114h-1zM97 322.8h1v2.8000000000000114h-1zM98 322.8h1v2.8000000000000114h-1zM99 322.8h1v2.8000000000000114h-1zM100 322.8h1v4.800000000000011h-1zM101 322.8h1v2.8000000000000114h-1zM102 322.8h1v2.8000000000000114h-1zM103 322.8h1v2.8000000000000114h-1zM104 322.8h1v2.8000000000000114h-1zM105 322.8h1v2.8000000000000114h-1zM106 323.3h1v2.8000000000000114h-1zM107 322.8h1v2.8000000000000114h-1zM108 323.3h1v2.8000000000000114h-1zM109 322.8h1v2.8000000000000114h-1zM110 322.8h1v2.8000000000000114h-1zM111 323.3h1v2.8000000000000114h-1zM112 322.8h1v2.8000000000000114h-1zM113 322.8h1v2.8000000000000114h-1zM114 322.8h1v3.8000000000000114h-1zM115 322.8h1v2.8000000000000114h-1zM116 322.8h1v2.8000000000000114h-1zM117 322.8h1v2.8000000000000114h-1zM118 322.8h1v2.8000000000000114h-1zM119 322.8h1v3.8000000000000114h-1zM120 322.8h1v2.8000000000000114h-1zM121 322.8h1v2.8000000000000114h-1zM122 323.3h1v2.8000000000000114h-1zM123 322.8h1v2.8000000000000114h-1zM124 322.8h1v2.8000000000000114h-1zM125 322.8h1v2.8000000000000114h-1zM126 322.8h1v2.8000000000000114h-1zM127 323.3h1v5.800000000000011h-1zM128 322.8h1v5.800000000000011h-1zM129 322.8h1v2.8000000000000114h-1zM130 322.8h1v3.8000000000000114h-1zM131 322.8h1v2.8000000000000114h-1zM132 323.3h1v2.8000000000000114h-1zM133 323.3h1v2.8000000000000114h-1zM134 323.3h1v2.8000000000000114h-1zM135 322.3h1v2.8000000000000114h-1zM136 322.8h1v2.8000000000000114h-1zM137 322.8h1v2.8000000000000114h-1zM138 320.8h1v4.800000000000011h-1zM139 322.8h1v2.8000000000000114h-1zM140 322.8h1v2.8000000000000114h-1zM141 322.8h1v2.8000000000000114h-1zM142 322.8h1v2.8000000000000114h-1zM143 321.3h1v4.300000000000011h-1zM144 322.8h1v2.8000000000000114h-1zM145 322.8h1v4.300000000000011h-1zM146 322.8h1v2.8000000000000114h-1zM147 322.8h1v2.8000000000000114h-1zM148 322.8h1v2.8000000000000114h-1zM149 322.8h1v3.8000000000000114h-1zM150 322.8h1v2.8000000000000114h-1zM151 322.8h1v2.8000000000000114h-1zM152 322.8h1v2.8000000000000114h-1zM153 322.8h1v2.8000000000000114h-1zM154 322.8h1v2.8000000000000114h-1zM155 322.8h1v2.8000000000000114h-1zM156 322.8h1v2.8000000000000114h-1zM157 322.8h1v2.8000000000000114h-1zM158 322.8h1v2.8000000000000114h-1zM159 322.8h1v2.8000000000000114h-1zM160 322.8h1v2.8000000000000114h-1zM161 322.8h1v3.8000000000000114h-1zM162 322.8h1v2.8000000000000114h-1zM163 322.8h1v2.8000000000000114h-1zM164 322.8h1v2.8000000000000114h-1zM165 323.3h1v2.8000000000000114h-1zM166 322.8h1v2.8000000000000114h-1zM167 322.8h1v2.8000000000000114h-1zM168 323.3h1v2.8000000000000114h-1zM169 322.8h1v5.800000000000011h-1zM170 323.3h1v2.8000000000000114h-1zM171 322.8h1v2.8000000000000114h-1zM172 322.8h1v2.8000000000000114h-1zM173 322.8h1v2.8000000000000114h-1zM174 322.3h1v2.8000000000000114h-1zM175 322.8h1v2.8000000000000114h-1zM176 322.8h1v2.8000000000000114h-1zM177 322.8h1v2.8000000000000114h-1zM178 322.8h1v4.300000000000011h-1zM179 322.8h1v4.800000000000011h-1zM180 322.8h1v2.8000000000000114h-1zM181 323.3h1v2.8000000000000114h-1zM182 322.8h1v2.8000000000000114h-1zM183 322.8h1v2.8000000000000114h-1zM184 322.8h1v2.8000000000000114h-1zM185 322.8h1v2.8000000000000114h-1zM186 322.8h1v2.8000000000000114h-1zM187 322.8h1v2.8000000000000114h-1zM188 322.8h1v2.8000000000000114h-1zM189 322.3h1v4.800000000000011h-1zM190 322.3h1v2.8000000000000114h-1zM191 322.3h1v2.8000000000000114h-1zM192 322.8h1v2.8000000000000114h-1zM193 322.8h1v2.8000000000000114h-1zM194 322.8h1v4.300000000000011h-1zM195 322.8h1v2.8000000000000114h-1zM196 322.8h1v2.8000000000000114h-1zM197 322.8h1v2.8000000000000114h-1zM198 322.8h1v2.8000000000000114h-1zM199 322.8h1v2.8000000000000114h-1zM200 322.8h1v2.8000000000000114h-1zM201 321.8h1v3.8000000000000114h-1zM202 322.8h1v2.8000000000000114h-1zM203 323.3h1v2.8000000000000114h-1zM204 322.8h1v5.800000000000011h-1zM205 322.8h1v2.8000000000000114h-1zM206 322.8h1v2.8000000000000114h-1zM207 322.8h1v2.8000000000000114h-1zM208 322.8h1v2.8000000000000114h-1zM209 322.8h1v2.8000000000000114h-1zM210 323.3h1v2.8000000000000114h-1zM211 322.8h1v2.8000000000000114h-1zM212 322.3h1v2.8000000000000114h-1zM213 322.8h1v2.8000000000000114h-1zM214 322.3h1v2.8000000000000114h-1zM215 322.8h1v2.8000000000000114h-1zM216 322.8h1v2.8000000000000114h-1zM217 321.8h1v3.8000000000000114h-1zM218 323.3h1v2.8000000000000114h-1zM219 322.8h1v2.8000000000000114h-1zM220 322.8h1v2.8000000000000114h-1zM221 322.8h1v2.8000000000000114h-1zM222 322.8h1v2.8000000000000114h-1zM223 322.3h1v2.8000000000000114h-1zM224 322.8h1v2.8000000000000114h-1zM225 322.8h1v2.8000000000000114h-1zM226 322.3h1v2.8000000000000114h-1zM227 322.3h1v2.8000000000000114h-1zM228 320.8h1v4.300000000000011h-1zM229 322.8h1v4.300000000000011h-1zM230 322.8h1v2.8000000000000114h-1zM231 322.8h1v2.8000000000000114h-1zM232 322.8h1v2.8000000000000114h-1zM233 323.3h1v2.8000000000000114h-1zM234 320.8h1v4.800000000000011h-1zM235 322.8h1v2.8000000000000114h-1zM236 322.8h1v2.8000000000000114h-1zM237 323.3h1v2.8000000000000114h-1zM238 322.8h1v2.8000000000000114h-1zM239 322.8h1v2.8000000000000114h-1zM240 322.8h1v2.8000000000000114h-1zM241 322.8h1v2.8000000000000114h-1zM242 321.8h1v3.8000000000000114h-1zM243 322.8h1v2.8000000000000114h-1zM244 322.8h1v2.8000000000000114h-1zM245 320.3h1v4.800000000000011h-1zM246 322.8h1v2.8000000000000114h-1zM247 322.3h1v2.8000000000000114h-1zM248 322.8h1v2.8000000000000114h-1zM249 322.8h1v2.8000000000000114h-1zM250 322.3h1v2.8000000000000114h-1zM251 321.3h1v4.300000000000011h-1zM252 322.8h1v2.8000000000000114h-1zM253 322.8h1v2.8000000000000114h-1zM254 322.8h1v2.8000000000000114h-1zM255 322.3h1v2.8000000000000114h-1zM256 320.8h1v4.800000000000011h-1zM257 321.8h1v3.8000000000000114h-1zM258 322.8h1v2.8000000000000114h-1zM259 322.8h1v2.8000000000000114h-1zM260 323.3h1v2.8000000000000114h-1zM261 322.8h1v2.8000000000000114h-1zM262 322.3h1v2.8000000000000114h-1zM263 322.8h1v2.8000000000000114h-1zM264 322.8h1v2.8000000000000114h-1zM265 322.8h1v2.8000000000000114h-1zM266 322.8h1v2.8000000000000114h-1zM267 322.3h1v2.8000000000000114h-1zM268 320.8h1v4.800000000000011h-1zM269 322.8h1v2.8000000000000114h-1zM270 322.8h1v2.8000000000000114h-1zM271 322.8h1v2.8000000000000114h-1zM272 322.8h1v4.800000000000011h-1zM273 322.8h1v4.800000000000011h-1zM274 322.8h1v2.8000000000000114h-1zM275 322.8h1v2.8000000000000114h-1zM276 321.8h1v3.8000000000000114h-1zM277 322.8h1v2.8000000000000114h-1zM278 322.8h1v2.8000000000000114h-1zM279 322.8h1v2.8000000000000114h-1zM280 323.3h1v2.8000000000000114h-1zM281 322.8h1v2.8000000000000114h-1zM282 322.8h1v2.8000000000000114h-1zM283 321.3h1v4.800000000000011h-1zM284 322.8h1v2.8000000000000114h-1zM285 322.8h1v2.8000000000000114h-1zM286 322.8h1v2.8000000000000114h-1zM287 322.8h1v2.8000000000000114h-1zM288 322.3h1v4.800000000000011h-1zM289 322.8h1v4.800000000000011h-1zM290 322.8h1v2.8000000000000114h-1zM291 322.8h1v2.8000000000000114h-1zM292 320.8h1v4.800000000000011h-1zM293 322.8h1v2.8000000000000114h-1zM294 322.8h1v2.8000000000000114h-1zM295 322.3h1v2.8000000000000114h-1zM296 322.8h1v2.8000000000000114h-1zM297 323.3h1v2.8000000000000114h-1zM298 322.8h1v2.8000000000000114h-1zM299 322.8h1v2.8000000000000114h-1zM300 322.8h1v2.8000000000000114h-1zM301 322.8h1v2.8000000000000114h-1zM302 322.8h1v2.8000000000000114h-1zM303 322.8h1v2.8000000000000114h-1zM304 322.8h1v4.300000000000011h-1zM305 322.3h1v2.8000000000000114h-1zM306 322.8h1v2.8000000000000114h-1zM307 322.8h1v2.8000000000000114h-1zM308 322.8h1v2.8000000000000114h-1zM309 322.8h1v2.8000000000000114h-1zM310 323.3h1v2.8000000000000114h-1zM311 322.8h1v2.8000000000000114h-1zM312 322.8h1v2.8000000000000114h-1zM313 322.3h1v2.8000000000000114h-1zM314 322.8h1v2.8000000000000114h-1zM315 322.8h1v2.8000000000000114h-1zM316 322.8h1v2.8000000000000114h-1zM317 322.8h1v2.8000000000000114h-1zM318 322.8h1v2.8000000000000114h-1zM319 322.8h1v2.8000000000000114h-1zM320 322.3h1v2.8000000000000114h-1zM321 322.8h1v2.8000000000000114h-1zM322 322.8h1v2.8000000000000114h-1zM323 322.8h1v2.8000000000000114h-1zM324 323.3h1v2.8000000000000114h-1zM325 322.8h1v2.8000000000000114h-1zM326 322.8h1v2.8000000000000114h-1zM327 322.3h1v2.8000000000000114h-1zM328 322.8h1v2.8000000000000114h-1zM329 322.8h1v2.8000000000000114h-1zM330 322.8h1v2.8000000000000114h-1zM331 323.3h1v2.8000000000000114h-1zM332 323.3h1v2.8000000000000114h-1zM333 322.8h1v2.8000000000000114h-1zM334 322.8h1v3.8000000000000114h-1zM335 322.3h1v3.8000000000000114h-1zM336 322.8h1v2.8000000000000114h-1zM337 323.3h1v2.8000000000000114h-1zM338 322.8h1v2.8000000000000114h-1zM339 321.3h1v4.800000000000011h-1zM340 322.8h1v2.8000000000000114h-1zM341 322.8h1v2.8000000000000114h-1zM342 322.3h1v2.8000000000000114h-1zM343 322.8h1v2.8000000000000114h-1zM344 322.8h1v2.8000000000000114h-1zM345 322.8h1v2.8000000000000114h-1zM346 321.3h1v4.300000000000011h-1zM347 322.8h1v2.8000000000000114h-1zM348 322.3h1v2.8000000000000114h-1zM349 322.8h1v2.8000000000000114h-1zM350 322.8h1v2.8000000000000114h-1zM351 322.8h1v2.8000000000000114h-1zM352 322.3h1v2.8000000000000114h-1zM353 322.8h1v2.8000000000000114h-1zM354 323.3h1v2.8000000000000114h-1zM355 322.8h1v2.8000000000000114h-1zM356 322.8h1v2.8000000000000114h-1zM357 322.8h1v2.8000000000000114h-1zM358 322.8h1v2.8000000000000114h-1zM359 322.8h1v2.8000000000000114h-1zM360 322.8h1v2.8000000000000114h-1zM361 323.3h1v2.8000000000000114h-1zM362 322.8h1v2.8000000000000114h-1zM363 322.8h1v5.800000000000011h-1zM364 320.3h1v4.800000000000011h-1zM365 322.3h1v3.8000000000000114h-1zM366 323.3h1v2.8000000000000114h-1zM367 322.8h1v2.8000000000000114h-1zM368 322.3h1v3.8000000000000114h-1zM369 322.8h1v2.8000000000000114h-1zM370 322.8h1v2.8000000000000114h-1zM371 322.3h1v2.8000000000000114h-1zM372 322.8h1v2.8000000000000114h-1zM373 322.8h1v3.8000000000000114h-1zM374 322.3h1v5.800000000000011h-1zM375 322.8h1v4.300000000000011h-1zM376 322.8h1v2.8000000000000114h-1zM377 322.8h1v2.8000000000000114h-1zM378 322.3h1v2.8000000000000114h-1zM379 323.3h1v2.8000000000000114h-1zM380 322.8h1v2.8000000000000114h-1zM381 322.8h1v2.8000000000000114h-1zM382 322.8h1v2.8000000000000114h-1zM383 322.8h1v2.8000000000000114h-1zM384 322.8h1v2.8000000000000114h-1zM385 321.8h1v3.8000000000000114h-1zM386 322.8h1v2.8000000000000114h-1zM387 322.8h1v2.8000000000000114h-1zM388 322.8h1v2.8000000000000114h-1zM389 322.8h1v2.8000000000000114h-1zM390 322.8h1v2.8000000000000114h-1zM391 322.3h1v2.8000000000000114h-1zM392 322.8h1v2.8000000000000114h-1zM393 321.8h1v3.8000000000000114h-1zM394 323.3h1v2.8000000000000114h-1zM395 322.8h1v2.8000000000000114h-1zM396 322.8h1v2.8000000000000114h-1zM397 322.8h1v5.800000000000011h-1zM398 323.3h1v2.8000000000000114h-1zM399 322.8h1v2.8000000000000114h-1zM400 322.8h1v2.8000000000000114h-1zM401 322.8h1v2.8000000000000114h-1zM402 322.8h1v2.8000000000000114h-1zM403 322.3h1v2.8000000000000114h-1zM404 322.8h1v2.8000000000000114h-1zM405 320.3h1v4.800000000000011h-1zM406 322.8h1v5.800000000000011h-1zM407 322.8h1v2.8000000000000114h-1zM408 322.8h1v3.8000000000000114h-1zM409 322.8h1v2.8000000000000114h-1zM410 322.8h1v2.8000000000000114h-1zM411 323.3h1v2.8000000000000114h-1zM412 322.8h1v2.8000000000000114h-1zM413 322.8h1v2.8000000000000114h-1zM414 322.8h1v2.8000000000000114h-1zM415 322.8h1v2.8000000000000114h-1zM416 322.8h1v2.8000000000000114h-1zM417 322.8h1v2.8000000000000114h-1zM418 323.3h1v2.8000000000000114h-1zM419 322.8h1v2.8000000000000114h-1zM420 321.8h1v4.300000000000011h-1zM421 322.8h1v2.8000000000000114h-1zM422 322.8h1v2.8000000000000114h-1zM423 322.8h1v2.8000000000000114h-1zM424 323.3h1v2.8000000000000114h-1zM425 322.8h1v2.8000000000000114h-1zM426 321.3h1v4.300000000000011h-1zM427 320.8h1v4.800000000000011h-1zM428 322.8h1v2.8000000000000114h-1zM429 322.8h1v2.8000000000000114h-1zM430 322.8h1v2.8000000000000114h-1zM431 322.8h1v2.8000000000000114h-1zM432 322.8h1v4.800000000000011h-1zM433 322.8h1v2.8000000000000114h-1zM434 323.3h1v2.8000000000000114h-1zM435 322.8h1v2.8000000000000114h-1zM436 322.8h1v2.8000000000000114h-1zM437 322.3h1v2.8000000000000114h-1zM438 322.8h1v2.8000000000000114h-1zM439 322.8h1v2.8000000000000114h-1zM440 322.8h1v2.8000000000000114h-1zM441 322.3h1v5.800000000000011h-1zM442 322.8h1v3.8000000000000114h-1zM443 322.8h1v2.8000000000000114h-1zM444 322.8h1v2.8000000000000114h-1zM445 322.8h1v2.8000000000000114h-1zM446 322.3h1v2.8000000000000114h-1zM447 322.8h1v2.8000000000000114h-1zM448 322.3h1v2.8000000000000114h-1zM449 322.8h1v2.8000000000000114h-1zM450 322.8h1v2.8000000000000114h-1zM451 322.8h1v2.8000000000000114h-1zM452 323.3h1v3.8000000000000114h-1zM453 322.8h1v2.8000000000000114h-1zM454 322.8h1v3.8000000000000114h-1zM455 322.3h1v5.800000000000011h-1zM456 322.3h1v2.8000000000000114h-1zM457 322.8h1v2.8000000000000114h-1zM458 323.3h1v2.8000000000000114h-1zM459 322.8h1v2.8000000000000114h-1zM460 323.3h1v2.8000000000000114h-1zM461 322.8h1v2.8000000000000114h-1zM462 323.3h1v3.8000000000000114h-1zM463 322.8h1v2.8000000000000114h-1zM464 322.3h1v2.8000000000000114h-1zM465 322.8h1v2.8000000000000114h-1zM466 322.8h1v2.8000000000000114h-1zM467 323.3h1v2.8000000000000114h-1zM468 322.8h1v2.8000000000000114h-1zM469 322.8h1v2.8000000000000114h-1zM470 323.3h1v2.8000000000000114h-1zM471 322.8h1v2.8000000000000114h-1zM472 322.8h1v4.300000000000011h-1zM473 322.8h1v2.8000000000000114h-1zM474 323.3h1v2.8000000000000114h-1zM475 322.8h1v2.8000000000000114h-1zM476 322.8h1v2.8000000000000114h-1zM477 322.8h1v2.8000000000000114h-1zM478 322.8h1v2.8000000000000114h-1zM479 322.8h1v2.8000000000000114h-1zM480 322.8h1v2.8000000000000114h-1zM481 322.8h1v2.8000000000000114h-1zM482 321.8h1v4.300000000000011h-1zM483 322.8h1v2.8000000000000114h-1zM484 322.8h1v2.8000000000000114h-1zM485 322.8h1v2.8000000000000114h-1zM486 321.3h1v4.300000000000011h-1zM487 322.8h1v5.800000000000011h-1zM488 322.8h1v2.8000000000000114h-1zM489 322.3h1v4.800000000000011h-1zM490 322.8h1v2.8000000000000114h-1zM491 322.3h1v2.8000000000000114h-1zM492 322.8h1v2.8000000000000114h-1zM493 323.3h1v2.8000000000000114h-1zM494 322.8h1v2.8000000000000114h-1zM495 322.8h1v2.8000000000000114h-1zM496 322.8h1v2.8000000000000114h-1zM497 322.8h1v2.8000000000000114h-1zM498 323.3h1v2.8000000000000114h-1zM499 321.3h1v4.300000000000011h-1zM500 322.8h1v2.8000000000000114h-1zM501 322.8h1v2.8000000000000114h-1zM502 322.8h1v2.8000000000000114h-1zM503 322.8h1v2.8000000000000114h-1zM504 322.8h1v2.8000000000000114h-1zM505 322.8h1v2.8000000000000114h-1zM506 322.8h1v2.8000000000000114h-1zM507 322.8h1v2.8000000000000114h-1zM508 322.8h1v2.8000000000000114h-1zM509 322.8h1v2.8000000000000114h-1zM510 322.8h1v2.8000000000000114h-1zM511 322.3h1v2.8000000000000114h-1zM512 322.8h1v2.8000000000000114h-1zM513 322.8h1v2.8000000000000114h-1zM514 322.8h1v2.8000000000000114h-1zM515 322.8h1v2.8000000000000114h-1zM516 322.8h1v2.8000000000000114h-1zM517 322.8h1v2.8000000000000114h-1zM518 323.3h1v2.8000000000000114h-1zM519 322.3h1v2.8000000000000114h-1zM520 322.8h1v2.8000000000000114h-1zM521 322.8h1v2.8000000000000114h-1zM522 322.8h1v2.8000000000000114h-1zM680 322.8h1v2.8000000000000114h-1zM681 322.8h1v2.8000000000000114h-1zM682 322.8h1v2.8000000000000114h-1zM683 322.8h1v2.8000000000000114h-1zM684 322.8h1v2.8000000000000114h-1zM685 322.3h1v2.8000000000000114h-1zM686 321.8h1v3.8000000000000114h-1zM687 322.3h1v2.8000000000000114h-1zM688 323.3h1v2.8000000000000114h-1zM689 322.8h1v2.8000000000000114h-1zM690 322.8h1v2.8000000000000114h-1zM691 322.8h1v2.8000000000000114h-1zM692 323.3h1v2.8000000000000114h-1zM693 322.8h1v3.8000000000000114h-1zM694 322.3h1v4.800000000000011h-1zM695 322.8h1v2.8000000000000114h-1zM696 322.3h1v2.8000000000000114h-1zM697 322.8h1v2.8000000000000114h-1zM698 322.8h1v2.8000000000000114h-1zM699 322.8h1v2.8000000000000114h-1zM700 322.8h1v2.8000000000000114h-1zM701 322.3h1v2.8000000000000114h-1zM702 322.8h1v2.8000000000000114h-1zM703 322.3h1v2.8000000000000114h-1zM704 322.3h1v2.8000000000000114h-1zM705 322.8h1v4.300000000000011h-1zM706 322.8h1v2.8000000000000114h-1zM707 322.8h1v2.8000000000000114h-1zM708 322.8h1v2.8000000000000114h-1zM709 322.3h1v2.8000000000000114h-1zM710 322.8h1v2.8000000000000114h-1zM711 322.8h1v2.8000000000000114h-1zM712 322.8h1v2.8000000000000114h-1zM713 322.8h1v5.800000000000011h-1zM714 323.3h1v2.8000000000000114h-1zM715 322.8h1v2.8000000000000114h-1zM716 323.3h1v2.8000000000000114h-1zM717 322.8h1v2.8000000000000114h-1zM718 320.8h1v4.800000000000011h-1zM719 322.8h1v2.8000000000000114h-1zM720 322.8h1v2.8000000000000114h-1zM721 322.8h1v2.8000000000000114h-1zM722 322.8h1v2.8000000000000114h-1zM723 321.3h1v4.300000000000011h-1zM724 322.8h1v2.8000000000000114h-1zM725 322.8h1v4.800000000000011h-1zM726 323.3h1v2.8000000000000114h-1zM727 322.8h1v2.8000000000000114h-1zM728 322.8h1v2.8000000000000114h-1zM729 322.8h1v2.8000000000000114h-1zM730 322.8h1v2.8000000000000114h-1zM731 321.8h1v3.8000000000000114h-1zM732 322.8h1v2.8000000000000114h-1zM733 322.8h1v2.8000000000000114h-1zM734 322.8h1v2.8000000000000114h-1zM735 322.3h1v2.8000000000000114h-1zM736 322.3h1v3.8000000000000114h-1zM737 322.8h1v4.300000000000011h-1zM738 321.8h1v3.8000000000000114h-1zM739 322.8h1v2.8000000000000114h-1zM740 322.8h1v2.8000000000000114h-1zM741 322.3h1v2.8000000000000114h-1zM742 322.8h1v2.8000000000000114h-1zM743 322.8h1v2.8000000000000114h-1zM744 322.3h1v2.8000000000000114h-1zM745 322.8h1v2.8000000000000114h-1zM746 323.3h1v2.8000000000000114h-1zM747 321.3h1v4.800000000000011h-1zM748 322.3h1v2.8000000000000114h-1zM749 322.8h1v2.8000000000000114h-1zM750 323.3h1v2.8000000000000114h-1zM751 322.8h1v2.8000000000000114h-1zM752 322.8h1v2.8000000000000114h-1zM753 322.8h1v2.8000000000000114h-1zM754 322.3h1v2.8000000000000114h-1zM755 322.8h1v2.8000000000000114h-1zM756 322.8h1v2.8000000000000114h-1zM757 322.8h1v2.8000000000000114h-1zM758 320.8h1v4.800000000000011h-1zM759 322.8h1v2.8000000000000114h-1zM760 322.8h1v2.8000000000000114h-1zM761 322.8h1v2.8000000000000114h-1zM762 322.3h1v2.8000000000000114h-1zM763 322.3h1v3.8000000000000114h-1zM764 322.8h1v2.8000000000000114h-1zM765 322.3h1v2.8000000000000114h-1zM766 322.3h1v2.8000000000000114h-1zM767 322.8h1v2.8000000000000114h-1zM768 322.8h1v2.8000000000000114h-1zM769 322.8h1v2.8000000000000114h-1zM770 323.3h1v2.8000000000000114h-1zM771 322.8h1v2.8000000000000114h-1zM772 323.3h1v2.8000000000000114h-1zM773 322.8h1v2.8000000000000114h-1zM774 322.8h1v2.8000000000000114h-1zM775 323.3h1v2.8000000000000114h-1zM776 322.3h1v2.8000000000000114h-1zM777 322.8h1v2.8000000000000114h-1zM778 322.8h1v2.8000000000000114h-1zM779 322.8h1v2.8000000000000114h-1zM780 322.8h1v2.8000000000000114h-1zM781 323.3h1v2.8000000000000114h-1zM782 322.8h1v2.8000000000000114h-1zM783 323.3h1v2.8000000000000114h-1zM784 322.8h1v2.8000000000000114h-1zM785 322.3h1v2.8000000000000114h-1zM786 322.8h1v2.8000000000000114h-1zM787 322.8h1v2.8000000000000114h-1zM788 322.8h1v2.8000000000000114h-1zM789 322.8h1v2.8000000000000114h-1zM790 322.8h1v2.8000000000000114h-1zM791 322.8h1v2.8000000000000114h-1zM792 322.8h1v2.8000000000000114h-1zM793 322.8h1v2.8000000000000114h-1zM794 322.8h1v2.8000000000000114h-1zM795 322.8h1v2.8000000000000114h-1zM796 322.8h1v2.8000000000000114h-1zM797 322.8h1v2.8000000000000114h-1zM798 322.8h1v2.8000000000000114h-1zM799 322.8h1v3.8000000000000114h-1zM800 323.3h1v4.300000000000011h-1zM801 322.8h1v2.8000000000000114h-1zM802 322.8h1v2.8000000000000114h-1zM803 322.8h1v4.300000000000011h-1zM804 322.8h1v2.8000000000000114h-1zM805 322.3h1v2.8000000000000114h-1zM806 322.8h1v2.8000000000000114h-1zM807 322.8h1v2.8000000000000114h-1zM808 322.3h1v2.8000000000000114h-1zM809 321.8h1v3.8000000000000114h-1zM810 322.8h1v2.8000000000000114h-1zM811 322.8h1v2.8000000000000114h-1zM812 322.8h1v2.8000000000000114h-1zM813 322.8h1v2.8000000000000114h-1zM814 322.8h1v2.8000000000000114h-1zM815 322.8h1v2.8000000000000114h-1zM816 322.8h1v2.8000000000000114h-1zM817 322.8h1v2.8000000000000114h-1zM818 322.3h1v2.8000000000000114h-1zM819 322.8h1v2.8000000000000114h-1zM820 322.8h1v2.8000000000000114h-1zM821 322.8h1v2.8000000000000114h-1zM822 322.8h1v2.8000000000000114h-1zM823 322.8h1v2.8000000000000114h-1zM824 323.3h1v2.8000000000000114h-1zM825 322.8h1v2.8000000000000114h-1zM826 322.8h1v2.8000000000000114h-1zM827 322.3h1v2.8000000000000114h-1zM828 323.3h1v2.8000000000000114h-1zM829 322.8h1v2.8000000000000114h-1zM830 323.3h1v2.8000000000000114h-1zM831 322.8h1v2.8000000000000114h-1zM832 322.8h1v2.8000000000000114h-1zM833 322.8h1v2.8000000000000114h-1zM834 322.8h1v2.8000000000000114h-1zM835 322.8h1v2.8000000000000114h-1zM836 322.8h1v2.8000000000000114h-1zM837 323.3h1v2.8000000000000114h-1zM838 321.3h1v4.300000000000011h-1zM839 321.8h1v3.8000000000000114h-1zM840 322.8h1v2.8000000000000114h-1zM841 322.8h1v2.8000000000000114h-1zM842 322.8h1v2.8000000000000114h-1zM843 322.8h1v2.8000000000000114h-1zM844 322.8h1v2.8000000000000114h-1zM845 322.8h1v2.8000000000000114h-1zM846 322.8h1v3.8000000000000114h-1zM847 322.8h1v2.8000000000000114h-1zM848 322.8h1v2.8000000000000114h-1zM849 322.8h1v2.8000000000000114h-1zM850 322.8h1v2.8000000000000114h-1zM851 322.8h1v2.8000000000000114h-1zM852 322.8h1v2.8000000000000114h-1zM853 322.8h1v5.800000000000011h-1zM854 322.8h1v2.8000000000000114h-1zM855 322.8h1v2.8000000000000114h-1zM856 322.8h1v2.8000000000000114h-1zM857 321.3h1v4.800000000000011h-1zM858 322.8h1v2.8000000000000114h-1zM859 322.8h1v2.8000000000000114h-1zM860 322.8h1v2.8000000000000114h-1zM861 322.3h1v2.8000000000000114h-1zM862 323.3h1v2.8000000000000114h-1zM863 322.8h1v4.800000000000011h-1zM864 322.8h1v4.800000000000011h-1zM865 321.8h1v3.8000000000000114h-1zM866 321.3h1v4.300000000000011h-1zM867 322.8h1v4.300000000000011h-1zM868 322.8h1v2.8000000000000114h-1zM869 322.8h1v2.8000000000000114h-1zM870 322.8h1v2.8000000000000114h-1zM871 322.8h1v2.8000000000000114h-1zM872 322.8h1v2.8000000000000114h-1zM873 322.3h1v2.8000000000000114h-1zM874 322.8h1v2.8000000000000114h-1zM875 322.8h1v2.8000000000000114h-1zM876 321.3h1v4.300000000000011h-1zM877 322.8h1v3.8000000000000114h-1zM878 322.8h1v2.8000000000000114h-1zM879 323.3h1v2.8000000000000114h-1zM880 322.3h1v2.8000000000000114h-1zM881 323.3h1v2.8000000000000114h-1zM882 322.8h1v2.8000000000000114h-1zM883 321.3h1v4.300000000000011h-1zM884 322.8h1v2.8000000000000114h-1zM885 322.8h1v2.8000000000000114h-1zM886 322.8h1v2.8000000000000114h-1zM887 320.8h1v4.800000000000011h-1zM888 322.8h1v2.8000000000000114h-1zM889 320.3h1v4.800000000000011h-1zM890 322.8h1v2.8000000000000114h-1zM891 322.8h1v2.8000000000000114h-1zM892 322.8h1v2.8000000000000114h-1zM893 322.3h1v2.8000000000000114h-1zM894 322.8h1v2.8000000000000114h-1zM895 322.8h1v2.8000000000000114h-1zM896 322.8h1v2.8000000000000114h-1zM897 322.8h1v2.8000000000000114h-1zM898 322.8h1v2.8000000000000114h-1zM899 322.8h1v2.8000000000000114h-1zM900 322.8h1v2.8000000000000114h-1zM901 322.8h1v2.8000000000000114h-1zM902 322.8h1v2.8000000000000114h-1zM903 322.8h1v2.8000000000000114h-1zM904 322.8h1v2.8000000000000114h-1zM905 322.8h1v2.8000000000000114h-1zM906 322.8h1v2.8000000000000114h-1zM907 320.8h1v4.800000000000011h-1zM908 322.8h1v2.8000000000000114h-1zM909 322.8h1v2.8000000000000114h-1zM910 321.8h1v4.300000000000011h-1zM911 322.8h1v2.8000000000000114h-1zM912 322.8h1v2.8000000000000114h-1zM913 322.8h1v2.8000000000000114h-1zM914 322.8h1v2.8000000000000114h-1zM915 322.8h1v2.8000000000000114h-1zM916 322.8h1v2.8000000000000114h-1zM917 322.8h1v2.8000000000000114h-1zM918 323.3h1v2.8000000000000114h-1zM919 322.3h1v2.8000000000000114h-1zM920 322.8h1v2.8000000000000114h-1zM921 322.8h1v2.8000000000000114h-1zM922 322.8h1v2.8000000000000114h-1zM923 322.8h1v2.8000000000000114h-1zM924 322.8h1v2.8000000000000114h-1zM925 322.8h1v2.8000000000000114h-1zM926 320.8h1v4.800000000000011h-1zM927 322.8h1v2.8000000000000114h-1zM928 322.8h1v2.8000000000000114h-1zM929 322.8h1v2.8000000000000114h-1zM930 322.3h1v2.8000000000000114h-1zM931 322.8h1v2.8000000000000114h-1zM932 322.8h1v5.800000000000011h-1zM933 322.8h1v5.800000000000011h-1z" fill="#ecf034"/>
<rect x="522" y="229" width="2.5" height="95" fill="#ecf034"/>
<rect x="522.8" y="197" width="1.7" height="33" fill="#c8c810"/>
<rect x="524.2" y="179" width="1.8" height="19" fill="#e0e000"/>
<path d="M524 180.0h1v7.0h-1zM525 179.0h1v8.0h-1zM526 179.0h1v7.0h-1zM527 180.0h1v9.0h-1zM528 177.0h1v9.0h-1zM529 179.0h1v7.0h-1zM530 179.0h1v5.0h-1zM531 179.0h1v7.0h-1zM532 179.0h1v10.0h-1zM533 179.0h1v7.0h-1zM534 180.0h1v6.0h-1zM535 179.0h1v8.0h-1zM536 179.0h1v7.0h-1zM537 179.0h1v5.0h-1zM538 179.0h1v10.0h-1zM539 179.0h1v5.0h-1zM540 179.0h1v7.0h-1zM541 180.0h1v6.0h-1zM542 177.0h1v12.0h-1zM543 179.0h1v7.0h-1zM544 179.0h1v5.0h-1zM545 179.0h1v5.0h-1zM546 179.0h1v7.0h-1zM547 179.0h1v5.0h-1zM548 179.0h1v9.0h-1zM549 179.0h1v5.0h-1zM550 179.0h1v10.0h-1zM551 179.0h1v7.0h-1zM552 179.0h1v7.0h-1zM553 180.0h1v8.5h-1zM554 180.0h1v7.0h-1zM555 180.0h1v8.0h-1zM556 180.0h1v6.0h-1zM557 179.0h1v7.0h-1zM558 179.0h1v6.0h-1zM559 179.0h1v7.0h-1zM560 179.0h1v7.0h-1zM561 179.0h1v7.0h-1zM562 179.0h1v10.0h-1zM563 179.0h1v9.5h-1zM564 179.0h1v10.0h-1zM565 179.0h1v9.5h-1zM566 179.0h1v9.5h-1zM567 179.0h1v7.0h-1zM568 179.0h1v7.0h-1zM569 180.0h1v8.0h-1zM570 179.0h1v5.0h-1zM571 179.0h1v5.0h-1zM572 179.0h1v10.0h-1zM573 179.0h1v10.0h-1zM574 179.0h1v8.0h-1zM575 179.0h1v7.0h-1zM576 178.0h1v11.0h-1zM577 179.0h1v9.5h-1zM578 179.0h1v7.0h-1zM579 179.0h1v7.0h-1zM580 179.0h1v6.0h-1zM581 179.0h1v7.0h-1zM582 179.0h1v8.0h-1zM583 179.0h1v7.0h-1zM584 179.0h1v7.0h-1zM585 179.0h1v10.0h-1zM586 179.0h1v7.0h-1zM587 177.5h1v8.5h-1zM588 179.0h1v7.0h-1zM589 179.0h1v5.0h-1zM590 179.0h1v6.0h-1zM591 179.0h1v8.0h-1zM592 179.0h1v7.0h-1zM593 177.0h1v9.0h-1zM594 179.0h1v10.0h-1zM595 178.0h1v7.0h-1zM596 179.0h1v7.0h-1zM597 180.0h1v6.0h-1zM598 179.0h1v9.5h-1zM599 179.0h1v5.0h-1zM600 179.0h1v9.0h-1zM601 179.0h1v7.0h-1zM602 179.0h1v7.0h-1zM603 179.0h1v7.0h-1zM604 180.0h1v6.0h-1zM605 177.0h1v9.0h-1zM606 179.0h1v10.0h-1zM607 179.0h1v7.0h-1zM608 179.0h1v8.0h-1zM609 179.0h1v6.0h-1zM610 179.0h1v7.0h-1zM611 180.0h1v7.0h-1zM612 180.0h1v6.0h-1zM613 179.0h1v6.0h-1zM614 180.0h1v5.0h-1zM615 177.0h1v9.0h-1zM616 179.0h1v10.0h-1zM617 177.5h1v8.5h-1zM618 177.0h1v11.0h-1zM619 179.0h1v7.0h-1zM620 178.0h1v8.0h-1zM621 179.0h1v6.0h-1zM622 179.0h1v9.5h-1zM623 179.0h1v9.5h-1zM624 180.0h1v6.0h-1zM625 179.0h1v7.0h-1zM626 179.0h1v5.0h-1zM627 180.0h1v5.0h-1zM628 179.0h1v9.0h-1zM629 180.0h1v8.0h-1zM630 179.0h1v8.0h-1zM631 179.0h1v7.0h-1zM632 179.0h1v7.0h-1zM633 180.0h1v8.0h-1zM634 179.0h1v8.0h-1zM635 179.0h1v7.0h-1zM636 179.0h1v7.0h-1zM637 179.0h1v5.0h-1zM638 179.0h1v7.0h-1zM639 179.0h1v10.0h-1zM640 180.0h1v6.0h-1zM641 180.0h1v6.0h-1zM642 179.0h1v9.5h-1zM643 179.0h1v7.0h-1zM644 179.0h1v7.0h-1zM645 179.0h1v9.5h-1zM646 179.0h1v7.0h-1zM647 179.0h1v5.0h-1zM648 179.0h1v7.0h-1zM649 179.0h1v6.0h-1zM650 179.0h1v7.0h-1zM651 179.0h1v7.0h-1zM652 179.0h1v8.0h-1zM653 180.0h1v7.0h-1zM654 179.0h1v7.0h-1zM655 179.0h1v9.0h-1zM656 180.0h1v6.0h-1zM657 179.0h1v7.0h-1zM658 180.0h1v4.0h-1zM659 179.0h1v7.0h-1zM660 178.0h1v8.0h-1zM661 179.0h1v7.0h-1zM662 178.0h1v7.0h-1zM663 179.0h1v9.0h-1zM664 180.0h1v6.0h-1zM665 179.0h1v8.0h-1zM666 179.0h1v5.0h-1zM667 179.0h1v7.0h-1zM668 178.0h1v8.0h-1zM669 179.0h1v9.5h-1zM670 179.0h1v7.0h-1zM671 179.0h1v7.0h-1zM672 179.0h1v5.0h-1zM673 177.0h1v11.5h-1zM674 180.0h1v4.0h-1zM675 178.0h1v8.0h-1zM676 177.5h1v9.5h-1zM677 180.0h1v4.0h-1zM678 179.0h1v7.0h-1zM679 179.0h1v7.0h-1z" fill="#ecf034"/>
<rect x="679.3" y="184" width="1.8" height="46" fill="#d0d010"/>
<rect x="679.5" y="229" width="3" height="95" fill="#ecf034"/>
<rect x="755.8" y="224" width="1.6" height="100" fill="#ecf034"/>
<rect x="831" y="227" width="1.6" height="97" fill="#ecf034"/>
<rect x="906" y="227" width="2.4" height="97" fill="#ecf034"/>
</svg>

<!-- top bar -->
<div class="t" style="left:29px;top:4px;color:#001458;letter-spacing:1.5px">AKTAKOM</div>
<div class="pill" style="left:144px;top:1px;width:96px;height:22px;background:#f00000"></div>
<div class="t" style="left:167px;top:4px;color:#3a0000;font-weight:bold">Stop</div>

<div class="pill" style="left:301px;top:1px;width:359px;height:22px"></div>
<svg class="a" style="left:0;top:0" width="960" height="30" viewBox="0 0 960 30">
<rect x="312" y="10.4" width="337" height="1.6" fill="#c4c438"/>
<path d="M354 2.3v20.5M354 3.2h2.6M606 2.3v20.5M606 3.2h-2.6" stroke="#c8c8d0" stroke-width="2" fill="none"/>
<path d="M436.3 2.3h6.6v2.5h-2v3h-2v-3h-2.6z" fill="#d030d8"/>
</svg>

<div class="pill" style="left:671px;top:1px;width:131px;height:22px"></div>
<svg class="a" style="left:0;top:0" width="960" height="24" viewBox="0 0 960 24">
<path d="M677 6.2Q677 4.3 679 4.3H689.4Q691.4 4.3 691.4 6.2V17.2L684.2 19.8L677 17.2Z" fill="#000" stroke="#8a34d8" stroke-width="1.6"/>
<path d="M679.3 8.9H689M684.2 8.9V16.6" stroke="#b844e8" stroke-width="1.6" fill="none"/>
</svg>
<div class="t" style="left:695px;top:5px;color:#dcdcdc">960.0ms</div>

<div class="pill" style="left:820px;top:1px;width:72px;height:22px"></div>
<div class="t" style="left:831px;top:3px;color:#dcdcdc">6:39</div>

<svg class="a" style="left:0;top:0" width="960" height="24" viewBox="0 0 960 24">
<path d="M909.5 13.8L918.5 10.5L921 15.2L912.2 18.8Z" fill="#102a80" stroke="#c89ac0" stroke-width="1.4"/>
<path d="M907.3 7.5Q907.8 3.8 911.5 3.8Q915.8 3.8 916.2 7Q914.5 9.5 911.8 10.5L910.5 13.5Q908.6 11 907.3 7.5Z" fill="#40c020"/>
</svg>

<!-- left trigger level marker -->
<svg class="a" style="left:0;top:310px" width="26" height="28" viewBox="0 0 26 28">
<path d="M0.8 3.5h16.5l6 10.5l-6 10.5h-16.5z" fill="#000" stroke="#c8e030" stroke-width="1.6"/>
</svg>
<div class="t" style="left:4px;top:315px;color:#d0e038;font-size:20px">2</div>

<!-- bottom area -->
<div class="a" style="left:0;top:623px;width:383px;height:97px;background:#5ab4d2"></div>
<div class="a" style="left:383px;top:623px;width:577px;height:23px;background:#0080e0"></div>
<div class="a" style="left:383px;top:646px;width:575px;height:71px;background:#0363a8"></div>
<div class="a" style="left:383px;top:717px;width:577px;height:3px;background:#0080e0"></div>

<div class="a" style="left:2px;top:623px;width:248px;height:24px;background:#000;border-radius:5px"></div>
<div class="a" style="left:2px;top:648px;width:248px;height:23px;background:#000;border-radius:5px"></div>
<div class="a" style="left:253px;top:623px;width:127px;height:48px;background:#000;border-radius:5px"></div>
<div class="a" style="left:2px;top:673px;width:378px;height:44px;background:#000;border-radius:5px"></div>

<!-- channel circles -->
<svg class="a" style="left:0;top:0" width="960" height="720" viewBox="0 0 960 720">
<circle cx="12" cy="636" r="9.5" fill="#f00000"/>
<circle cx="12" cy="660" r="9.5" fill="#e8e800"/>
<circle cx="12" cy="684" r="9.5" fill="#e8e800"/>
<circle cx="12" cy="706.5" r="9.5" fill="#e8e800"/>
<circle cx="202" cy="684" r="9.5" fill="#e8e800"/>
<circle cx="202" cy="706.5" r="9.5" fill="#e8e800"/>
</svg>
<div class="t" style="left:6px;top:626px;color:#000;font-size:18px;font-weight:bold;letter-spacing:0">1</div>
<div class="t" style="left:6px;top:650px;color:#000;font-size:18px;font-weight:bold;letter-spacing:0">2</div>
<div class="t" style="left:6px;top:674px;color:#000;font-size:18px;font-weight:bold;letter-spacing:0">2</div>
<div class="t" style="left:6px;top:697px;color:#000;font-size:18px;font-weight:bold;letter-spacing:0">2</div>
<div class="t" style="left:196px;top:674px;color:#000;font-size:18px;font-weight:bold;letter-spacing:0">2</div>
<div class="t" style="left:196px;top:697px;color:#000;font-size:18px;font-weight:bold;letter-spacing:0">2</div>

<div class="t" style="left:22px;top:629px;color:#c81414">50.0mV-</div><div class="t" style="left:127px;top:629px;color:#c81414">2.00div</div>
<div class="t" style="left:22px;top:653px;color:#cccc38">2V-</div><div class="t" style="left:127px;top:653px;color:#cccc38">0.00div</div>
<div class="t" style="left:258px;top:626px;color:#d8d8d8;letter-spacing:0.9px">(1.25KS/s)</div>
<div class="t" style="left:262px;top:650px;color:#d8d8d8">Depth:10K</div>
<div class="t" style="left:25px;top:675px;color:#cccc38">F:  ?</div>
<div class="t" style="left:25px;top:698px;color:#cccc38">+D:99.2%</div>
<div class="t" style="left:216px;top:676px;color:#cccc38">Vk:1.955v</div>
<div class="t" style="left:216px;top:698px;color:#cccc38">V:814.5mv</div>

<div class="pill" style="left:383px;top:624px;width:119px;height:21px;border-radius:10.5px"></div>
<div class="t" style="left:399px;top:626px;color:#dcdcdc;letter-spacing:1.7px">M:400ms</div>

<div class="pill" style="left:798px;top:623px;width:155px;height:22px"></div>
<svg class="a" style="left:800px;top:624px" width="22" height="22" viewBox="0 0 22 22"><circle cx="10.5" cy="10.5" r="9.5" fill="#e8e800"/></svg>
<div class="t" style="left:805px;top:624px;color:#000;font-size:18px;font-weight:bold;letter-spacing:0">2</div>
<svg class="a" style="left:820px;top:624px" width="30" height="22" viewBox="0 0 30 22">
<path d="M2 19h8.5l5-16h11" stroke="#e8e8e8" stroke-width="1.5" fill="none"/>
</svg>
<div class="t" style="left:847px;top:627px;color:#dcdcdc">0.00mV</div>

<!-- Type button -->
<div class="a" style="left:387px;top:648px;width:103px;height:64px;background:#0a80e2;box-shadow:-1px 0 0 #0050a8;border-top:2px solid #5cb2f2;border-left:2px solid #5cb2f2;border-right:3px solid #003c90;border-bottom:3px solid #003c90;border-radius:2px"></div>
<div class="t" style="left:415px;top:659px;color:#06206a;font-weight:bold">Type</div>
<div class="a" style="left:409px;top:685px;width:60px;height:24px;background:#e4e4e4"></div>
<div class="t" style="left:409px;top:688px;color:#000">Image</div>

<!-- Save button -->
<div class="a" style="left:717px;top:649px;width:101px;height:63px;background:#0a80e2;box-shadow:-1px 0 0 #0050a8;border-top:2px solid #5cb2f2;border-left:2px solid #5cb2f2;border-right:3px solid #003c90;border-bottom:3px solid #003c90;border-radius:2px"></div>
<div class="a" style="left:744px;top:673px;white-space:pre;font-family:'Liberation Sans',sans-serif;font-size:17px;font-weight:bold;letter-spacing:2.2px;color:#0a2a70">Save</div>
</div></body></html>
